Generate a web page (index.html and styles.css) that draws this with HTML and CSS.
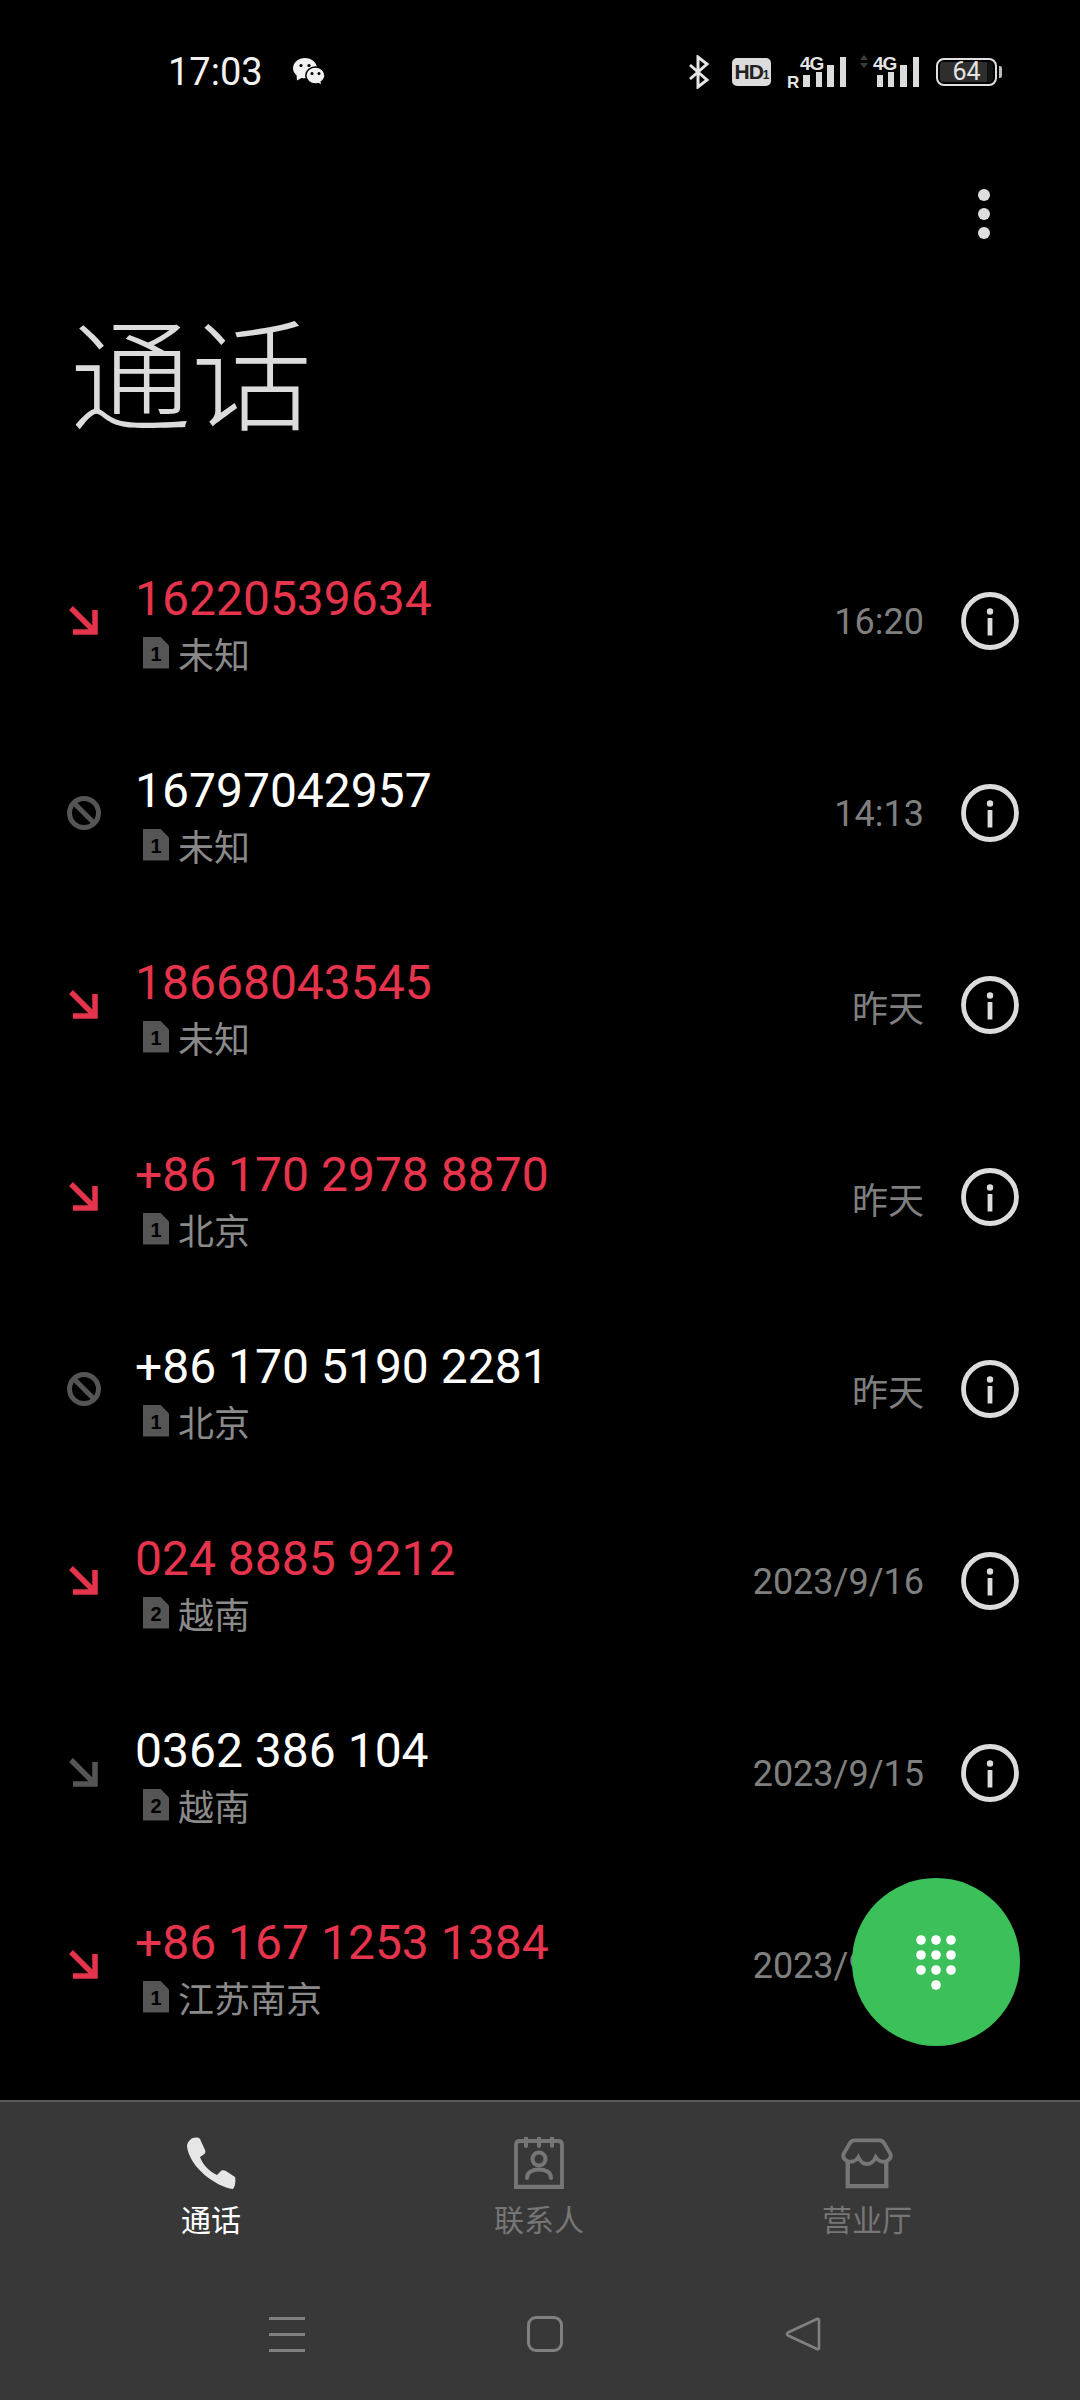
FILE: index.html
```html
<!DOCTYPE html>
<html lang="zh-CN">
<head>
  <meta charset="UTF-8">
  <title>通话</title>
  <link rel="stylesheet" href="styles.css">
</head>
<body>
  <svg class="defs">
    <symbol id="arrow" viewBox="0 0 34 34">
      <path d="M4 4 L28 28 M28 6 V28 H6" fill="none" stroke="currentColor" stroke-width="5.5"/>
    </symbol>
    <symbol id="blocked" viewBox="0 0 34 34">
      <circle cx="17" cy="17" r="14.5" fill="none" stroke="currentColor" stroke-width="5"/>
      <path d="M7 7 L27 27" stroke="currentColor" stroke-width="5"/>
    </symbol>
    <symbol id="info" viewBox="0 0 58 58">
      <circle cx="29" cy="29" r="26.5" fill="none" stroke="currentColor" stroke-width="4.8"/>
      <circle cx="29" cy="19.5" r="3.2" fill="currentColor"/>
      <rect x="26.6" y="26" width="4.8" height="17.5" fill="currentColor"/>
    </symbol>
  </svg>

  <div class="page">
    <div class="status-bar">
      <div class="status-left">
        <span class="clock">17:03</span>
        <svg class="wechat" viewBox="0 0 32 28">
          <path d="M4 22.500 L3.500 17 C1.300 15.300 0 12.900 0 10.200 C0 4.600 5.400 0 12 0 C18.600 0 24 4.600 24 10.200 C24 15.800 18.600 20.300 12 20.300 C10.800 20.300 9.600 20.200 8.500 19.900 Z" fill="#f2f2f2"/>
          <circle cx="8" cy="7.500" r="1.600" fill="#000"/>
          <circle cx="16" cy="7.500" r="1.600" fill="#000"/>
          <path d="M29 27.500 L28.300 23.800 C30.600 22.200 32 20 32 17.500 C32 12.800 27.700 9 22.400 9 C17.100 9 12.800 12.800 12.800 17.500 C12.800 22.200 17.100 26 22.400 26 C23.400 26 24.400 25.900 25.300 25.600 Z" fill="#f2f2f2" stroke="#000" stroke-width="1.500"/>
          <circle cx="19" cy="15.500" r="1.500" fill="#000"/>
          <circle cx="26" cy="15.500" r="1.500" fill="#000"/>
        </svg>
      </div>
      <div class="status-right">
        <svg class="bluetooth" viewBox="0 0 22 34">
          <path d="M2 10 L19 25 L10 32 V2 L19 9 L2 24" fill="none" stroke="#e4e4e4" stroke-width="3"/>
        </svg>
        <div class="hd-badge">HD<small>1</small></div>
        <svg class="signal" viewBox="0 -5 59 44" width="59" height="44">
          <text x="0" y="33" class="signal-r">R</text>
          <text x="13" y="15" class="signal-4g">4G</text>
          <rect x="16" y="20" width="7" height="12" fill="#dcdcdc"/>
          <rect x="29" y="17" width="6" height="15" fill="#dcdcdc"/>
          <rect x="40" y="10" width="7" height="22" fill="#dcdcdc"/>
          <rect x="53" y="2" width="6" height="30" fill="#dcdcdc"/>
        </svg>
        <svg class="signal" viewBox="0 -5 62 44" width="62" height="44">
          <path d="M4 0 L8 5 H0 Z M0 8 H8 L4 13 Z" fill="#3c3c3c"/>
          <text x="13" y="15" class="signal-4g">4G</text>
          <rect x="17" y="20" width="6" height="12" fill="#dcdcdc"/>
          <rect x="28" y="17" width="6" height="15" fill="#dcdcdc"/>
          <rect x="40" y="10" width="7" height="22" fill="#dcdcdc"/>
          <rect x="53" y="2" width="6" height="30" fill="#dcdcdc"/>
        </svg>
        <div class="battery">
          <div class="battery-body"><span class="battery-level">64</span></div>
          <div class="battery-nub"></div>
        </div>
      </div>
    </div>

    <div class="toolbar">
      <div class="more"><i></i><i></i><i></i></div>
    </div>

    <h1 class="title">通话</h1>

    <div class="call-list">
      <div class="call-row missed">
        <svg class="call-type"><use href="#arrow"/></svg>
        <div class="call-info">
          <div class="call-number">16220539634</div>
          <div class="call-sub"><span class="sim">1</span>未知</div>
        </div>
        <div class="call-time">16:20</div>
        <svg class="info-btn"><use href="#info"/></svg>
      </div>
      <div class="call-row">
        <svg class="call-type"><use href="#blocked"/></svg>
        <div class="call-info">
          <div class="call-number">16797042957</div>
          <div class="call-sub"><span class="sim">1</span>未知</div>
        </div>
        <div class="call-time">14:13</div>
        <svg class="info-btn"><use href="#info"/></svg>
      </div>
      <div class="call-row missed">
        <svg class="call-type"><use href="#arrow"/></svg>
        <div class="call-info">
          <div class="call-number">18668043545</div>
          <div class="call-sub"><span class="sim">1</span>未知</div>
        </div>
        <div class="call-time">昨天</div>
        <svg class="info-btn"><use href="#info"/></svg>
      </div>
      <div class="call-row missed">
        <svg class="call-type"><use href="#arrow"/></svg>
        <div class="call-info">
          <div class="call-number">+86 170 2978 8870</div>
          <div class="call-sub"><span class="sim">1</span>北京</div>
        </div>
        <div class="call-time">昨天</div>
        <svg class="info-btn"><use href="#info"/></svg>
      </div>
      <div class="call-row">
        <svg class="call-type"><use href="#blocked"/></svg>
        <div class="call-info">
          <div class="call-number">+86 170 5190 2281</div>
          <div class="call-sub"><span class="sim">1</span>北京</div>
        </div>
        <div class="call-time">昨天</div>
        <svg class="info-btn"><use href="#info"/></svg>
      </div>
      <div class="call-row missed">
        <svg class="call-type"><use href="#arrow"/></svg>
        <div class="call-info">
          <div class="call-number">024 8885 9212</div>
          <div class="call-sub"><span class="sim">2</span>越南</div>
        </div>
        <div class="call-time">2023/9/16</div>
        <svg class="info-btn"><use href="#info"/></svg>
      </div>
      <div class="call-row">
        <svg class="call-type"><use href="#arrow"/></svg>
        <div class="call-info">
          <div class="call-number">0362 386 104</div>
          <div class="call-sub"><span class="sim">2</span>越南</div>
        </div>
        <div class="call-time">2023/9/15</div>
        <svg class="info-btn"><use href="#info"/></svg>
      </div>
      <div class="call-row missed">
        <svg class="call-type"><use href="#arrow"/></svg>
        <div class="call-info">
          <div class="call-number">+86 167 1253 1384</div>
          <div class="call-sub"><span class="sim">1</span>江苏南京</div>
        </div>
        <div class="call-time">2023/9/14</div>
        <svg class="info-btn"><use href="#info"/></svg>
      </div>
    </div>

    <div class="fab">
      <svg viewBox="0 0 40 55" width="40" height="55">
        <circle cx="5" cy="5" r="4.800"/><circle cx="20" cy="5" r="4.800"/><circle cx="35" cy="5" r="4.800"/>
        <circle cx="5" cy="20" r="4.800"/><circle cx="20" cy="20" r="4.800"/><circle cx="35" cy="20" r="4.800"/>
        <circle cx="5" cy="35" r="4.800"/><circle cx="20" cy="35" r="4.800"/><circle cx="35" cy="35" r="4.800"/>
        <circle cx="20" cy="50" r="4.800"/>
      </svg>
    </div>

    <div class="bottom">
      <div class="tabs">
        <div class="tab active">
          <svg class="tab-icon" viewBox="0 0 52 52">
            <path d="M5 3 C8 0 13 0 15 2 L20 13 C21 15 20 17 18 18 L15 20 C18 28 24 34 32 38 L35 35 C36 33 39 33 41 34 L50 40 C51 44 50 50 48 52 C31 50 4 30 2 9 C2 7 3 5 5 3 Z" fill="#e6e6e6"/>
          </svg>
          <span>通话</span>
        </div>
        <div class="tab">
          <svg class="tab-icon" viewBox="0 0 52 52">
            <path d="M3 50 V8 C3 5.500 4.500 4 7 4 H45 C47.500 4 49 5.500 49 8 V50 Z" fill="none" stroke="#767676" stroke-width="3.800"/>
            <path d="M1.500 50 H50.500" stroke="#767676" stroke-width="4.500"/>
            <path d="M13 0 V9 M26 0 V9 M39 0 V9" stroke="#767676" stroke-width="4" stroke-linecap="round"/>
            <circle cx="26" cy="22" r="6.500" fill="none" stroke="#767676" stroke-width="4"/>
            <path d="M14 41 C14 35 20 32.500 26 32.500 C32 32.500 38 35 38 41" fill="none" stroke="#767676" stroke-width="4" stroke-linecap="round"/>
          </svg>
          <span>联系人</span>
        </div>
        <div class="tab">
          <svg class="tab-icon" viewBox="0 0 54 52">
            <path d="M14 2.500 H40 C42 2.500 43.500 3.500 44.500 5 L51 16 C52.500 19 51 22 47.500 24 C43 25.500 38.500 24 36 20 C33.500 25.500 30.500 27 27 27 C23.500 27 20.500 25.500 18 20 C15.500 24 11 25.500 6.500 24 C3 22 1.500 19 3 16 L9.500 5 C10.500 3.500 12 2.500 14 2.500 Z" fill="none" stroke="#767676" stroke-width="4"/>
            <path d="M7 25 V50 H47 V25" fill="none" stroke="#767676" stroke-width="4.500"/>
          </svg>
          <span>营业厅</span>
        </div>
      </div>
      <div class="nav-keys">
        <div class="nav-key">
          <div class="menu-key"><i></i><i></i><i></i></div>
        </div>
        <div class="nav-key"><div class="home-key"></div></div>
        <div class="nav-key">
          <svg class="back-key" viewBox="0 0 36 36">
            <path d="M32 3 C33 2.500 34 3 34 4 V32 C34 33 33 33.500 32 33 L3 19.500 C1.500 18.500 1.500 17.500 3 16.500 Z" fill="none" stroke="#808080" stroke-width="2.600"/>
          </svg>
        </div>
      </div>
    </div>
  </div>
</body>
</html>
```

FILE: styles.css
```css
* {
  margin: 0;
  padding: 0;
  box-sizing: border-box;
}

:root {
  --red: #e5344c;
  --grey: #7f7f7f;
  --icon-grey: #555;
}

body {
  background: #000;
  font-family: Roboto, "Noto Sans CJK SC", sans-serif;
}

.defs {
  position: absolute;
  width: 0;
  height: 0;
}

.page {
  position: relative;
  width: 1080px;
  height: 2400px;
  display: flex;
  flex-direction: column;
  overflow: hidden;
  background: #000;
}

/* status bar */
.status-bar {
  height: 144px;
  flex: none;
  display: flex;
  align-items: center;
  justify-content: space-between;
  padding: 0 78px 0 168px;
}

.status-left {
  display: flex;
  align-items: center;
  gap: 30px;
}

.clock {
  font-size: 38px;
  color: #f2f2f2;
}

.wechat {
  width: 32px;
  height: 28px;
}

.status-right {
  display: flex;
  align-items: center;
  gap: 14px;
}

.bluetooth {
  width: 22px;
  height: 34px;
  margin-right: 8px;
}

.hd-badge {
  width: 39px;
  height: 28px;
  background: #dcdcdc;
  border-radius: 5px;
  color: #222;
  font-family: "Liberation Sans", sans-serif;
  font-size: 21px;
  font-weight: 700;
  line-height: 28px;
  text-align: center;
  letter-spacing: -1px;
  margin-right: 2px;
}

.hd-badge small {
  font-size: 12px;
}

.signal text {
  fill: #e4e4e4;
  font-family: "Liberation Sans", sans-serif;
  font-weight: 700;
}

.signal-r {
  font-size: 17px;
}

.signal-4g {
  font-size: 19px;
  letter-spacing: -1px;
}

.battery {
  display: flex;
  align-items: center;
  gap: 2px;
}

.battery-body {
  width: 61px;
  height: 28px;
  border: 2px solid #e0e0e0;
  border-radius: 8px;
  padding: 2px;
  display: flex;
}

.battery-level {
  flex: 1;
  background: linear-gradient(to right, #2e2e2e 88%, #111 88%);
  border-radius: 3px;
  color: #e4e4e4;
  font-size: 25px;
  line-height: 20px;
  text-align: center;
}

.battery-nub {
  width: 3px;
  height: 12px;
  background: #bbb;
  border-radius: 0 2px 2px 0;
}

/* header */
.toolbar {
  height: 140px;
  flex: none;
  display: flex;
  align-items: center;
  justify-content: flex-end;
  padding-right: 90px;
}

.more {
  display: flex;
  flex-direction: column;
  gap: 7px;
}

.more i {
  display: block;
  width: 12px;
  height: 12px;
  border-radius: 50%;
  background: #dedede;
}

.title {
  height: 170px;
  flex: none;
  padding-left: 70px;
  margin-bottom: 71px;
  font-size: 121px;
  font-weight: 300;
  line-height: 170px;
  color: #dcdcdc;
  font-family: "Noto Sans CJK SC", sans-serif;
}

/* call list */
.call-list {
  flex: none;
}

.call-row {
  height: 192px;
  display: flex;
  align-items: center;
  padding: 0 61px 0 67px;
  color: #fff;
}

.call-type {
  width: 34px;
  height: 34px;
  margin-right: 34px;
  flex: none;
  color: var(--icon-grey);
}

.missed .call-type {
  color: var(--red);
}

.call-info {
  flex: 1;
  padding-top: 4px;
}

.call-number {
  font-size: 48px;
  line-height: 58px;
}

.missed .call-number {
  color: var(--red);
}

.call-sub {
  display: flex;
  align-items: center;
  padding-left: 8px;
  padding-top: 1px;
  font-size: 36px;
  line-height: 48px;
  color: #8a8a8a;
  font-family: "Noto Sans CJK SC", sans-serif;
}

.sim {
  width: 26px;
  height: 32px;
  margin-right: 9px;
  background: var(--icon-grey);
  clip-path: polygon(0 0, 66% 0, 100% 28%, 100% 100%, 0 100%);
  color: #000;
  font-family: "Liberation Sans", sans-serif;
  font-size: 20px;
  font-weight: 700;
  line-height: 34px;
  text-align: center;
}

.call-time {
  padding-top: 2px;
  font-size: 36px;
  color: var(--grey);
  margin-right: 37px;
  font-family: Roboto, "Noto Sans CJK SC", sans-serif;
}

.info-btn {
  width: 58px;
  height: 58px;
  flex: none;
  color: #dcdcdc;
}

/* dial button */
.fab {
  position: absolute;
  left: 852px;
  top: 1878px;
  width: 168px;
  height: 168px;
  border-radius: 50%;
  background: #3cc05a;
  display: flex;
  align-items: center;
  justify-content: center;
}

.fab svg {
  fill: #fff;
}

/* bottom tabs and system keys */
.bottom {
  margin-top: auto;
  height: 300px;
  flex: none;
  background: #383838;
  border-top: 2px solid #5a5a5a;
}

.tabs {
  display: grid;
  grid-template-columns: repeat(3, 328px);
  padding: 35px 0 0 47px;
}

.tab {
  display: flex;
  flex-direction: column;
  align-items: center;
  color: #767676;
  font-size: 30px;
  line-height: 40px;
  font-family: "Noto Sans CJK SC", sans-serif;
}

.tab.active {
  color: #fff;
}

.tab-icon {
  width: 52px;
  height: 52px;
  margin-bottom: 9px;
}

.nav-keys {
  display: grid;
  grid-template-columns: repeat(3, 258px);
  padding: 78px 0 0 158px;
}

.nav-key {
  height: 36px;
  display: flex;
  justify-content: center;
  align-items: center;
}

.menu-key {
  width: 36px;
  display: flex;
  flex-direction: column;
  gap: 13px;
}

.menu-key i {
  display: block;
  height: 3px;
  background: #808080;
}

.home-key {
  width: 36px;
  height: 36px;
  border: 3px solid #808080;
  border-radius: 9px;
}

.back-key {
  width: 36px;
  height: 36px;
}
```
